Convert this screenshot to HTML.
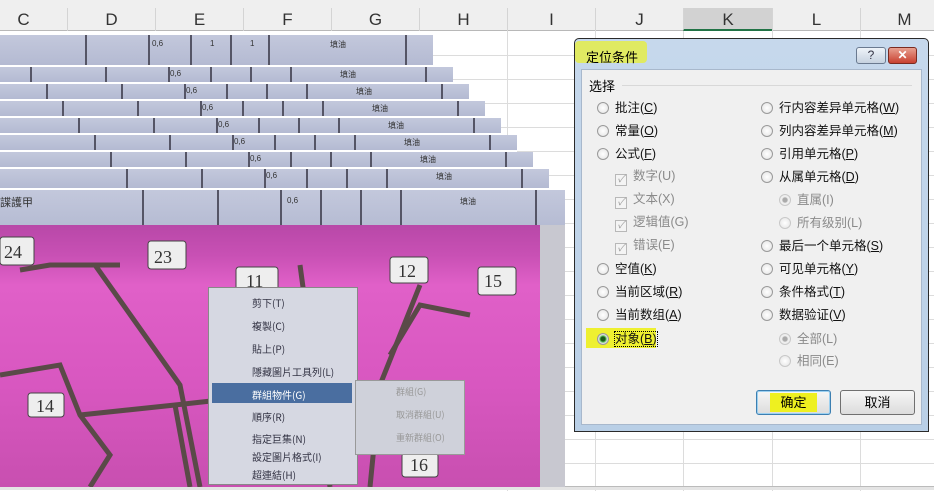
<!DOCTYPE html>
<html><head><meta charset="utf-8"><style>
*{margin:0;padding:0;box-sizing:border-box}
body{width:934px;height:490px;overflow:hidden;background:#fff;position:relative;font-family:"Liberation Sans","Noto Sans CJK SC",sans-serif;}
.abs{position:absolute}
.hdr{position:absolute;top:0;left:0;width:934px;height:31px;background:#efefef;border-bottom:1px solid #b8b8b8}
.col{position:absolute;top:8px;height:23px;border-left:1px solid #d4d4d4;font-size:17px;color:#333;text-align:center;line-height:24px}
.hl{position:absolute;left:0;width:934px;height:1px;background:#dcdcdc}
.vl{position:absolute;top:31px;width:1px;height:460px;background:#dcdcdc}
.strip{position:absolute;left:0;background:linear-gradient(#c3c8dc,#b4bad2);border-bottom:2px solid #fff}
.strip span{position:absolute;top:2px;font-size:8px;color:#333}
.strip b{position:absolute;top:0;bottom:0;width:2px;background:#556}
.dlg{position:absolute;left:574px;top:38px;width:355px;height:394px;border:1px solid #2a2a2a;border-radius:5px 5px 0 0;background:linear-gradient(#c6d8ec,#b9cfe6)}
.pan{position:absolute;left:6px;top:30px;width:341px;height:356px;background:#f0f0f0;border:1px solid #a8b8cc}
.o{position:absolute;font-size:12.5px;color:#111;white-space:nowrap;line-height:14px}
.o.d{color:#8a8a8a}
.r{display:inline-block;width:12px;height:12px;border-radius:50%;border:1px solid #9a9a9a;background:radial-gradient(#fff,#e2e2e2);vertical-align:-2px;margin-right:6px}
.r.d{border-color:#c8c8c8}
.c{display:inline-block;width:12px;height:12px;border:1px solid #b8b8b8;background:#f4f4f4;vertical-align:-2px;margin-right:6px;font-size:10px;line-height:10px;color:#9a9a9a;text-align:center}
u{text-decoration:underline}
.btn{position:absolute;height:25px;border:1px solid #707070;border-radius:3px;background:linear-gradient(#f6f6f6,#dcdcdc);font-size:13px;text-align:center;line-height:23px}
.mi{position:absolute;left:44px;font-size:10px;color:#334}
.si{position:absolute;left:40px;font-size:9px;color:#999}
</style></head><body>
<div class="hdr">
 <div class="col" style="left:-21px;width:88px">C</div>
 <div class="col" style="left:67px;width:88px">D</div>
 <div class="col" style="left:155px;width:88px">E</div>
 <div class="col" style="left:243px;width:88px">F</div>
 <div class="col" style="left:331px;width:88px">G</div>
 <div class="col" style="left:419px;width:88px">H</div>
 <div class="col" style="left:507px;width:88px">I</div>
 <div class="col" style="left:595px;width:88px">J</div>
 <div class="col" style="left:683px;width:89px;background:#d2d2d2;border-bottom:2px solid #217346">K</div>
 <div class="col" style="left:772px;width:88px">L</div>
 <div class="col" style="left:860px;width:88px">M</div>
</div>
<div class="vl" style="left:507px"></div><div class="vl" style="left:595px"></div><div class="vl" style="left:683px"></div><div class="vl" style="left:772px"></div><div class="vl" style="left:860px"></div>
<div class="hl" style="top:55px"></div><div class="hl" style="top:79px"></div><div class="hl" style="top:103px"></div><div class="hl" style="top:127px"></div><div class="hl" style="top:151px"></div><div class="hl" style="top:175px"></div><div class="hl" style="top:199px"></div><div class="hl" style="top:223px"></div><div class="hl" style="top:247px"></div><div class="hl" style="top:271px"></div><div class="hl" style="top:295px"></div><div class="hl" style="top:319px"></div><div class="hl" style="top:343px"></div><div class="hl" style="top:367px"></div><div class="hl" style="top:391px"></div><div class="hl" style="top:415px"></div><div class="hl" style="top:439px"></div><div class="hl" style="top:463px"></div>
<div class="abs" style="left:0;top:486px;width:934px;height:4px;background:#e4e4e4;border-top:1px solid #bbb"></div>

<div class="strip" style="top:35px;width:433px;height:32px"><b style="left:85px"></b><b style="left:148px"></b><b style="left:190px"></b><b style="left:230px"></b><b style="left:268px"></b><b style="left:405px"></b><span style="left:152px;top:4px">0,6</span><span style="left:210px;top:4px">1</span><span style="left:250px;top:4px">1</span><span style="left:330px;top:4px">填油</span></div>
<div class="strip" style="top:67px;width:453px;height:17px"><b style="left:30px"></b><b style="left:105px"></b><b style="left:168px"></b><b style="left:210px"></b><b style="left:250px"></b><b style="left:290px"></b><b style="left:425px"></b><span style="left:170px">0,6</span><span style="left:340px">填油</span></div>
<div class="strip" style="top:84px;width:469px;height:17px"><b style="left:46px"></b><b style="left:121px"></b><b style="left:184px"></b><b style="left:226px"></b><b style="left:266px"></b><b style="left:306px"></b><b style="left:441px"></b><span style="left:186px">0,6</span><span style="left:356px">填油</span></div>
<div class="strip" style="top:101px;width:485px;height:17px"><b style="left:62px"></b><b style="left:137px"></b><b style="left:200px"></b><b style="left:242px"></b><b style="left:282px"></b><b style="left:322px"></b><b style="left:457px"></b><span style="left:202px">0,6</span><span style="left:372px">填油</span></div>
<div class="strip" style="top:118px;width:501px;height:17px"><b style="left:78px"></b><b style="left:153px"></b><b style="left:216px"></b><b style="left:258px"></b><b style="left:298px"></b><b style="left:338px"></b><b style="left:473px"></b><span style="left:218px">0,6</span><span style="left:388px">填油</span></div>
<div class="strip" style="top:135px;width:517px;height:17px"><b style="left:94px"></b><b style="left:169px"></b><b style="left:232px"></b><b style="left:274px"></b><b style="left:314px"></b><b style="left:354px"></b><b style="left:489px"></b><span style="left:234px">0,6</span><span style="left:404px">填油</span></div>
<div class="strip" style="top:152px;width:533px;height:17px"><b style="left:110px"></b><b style="left:185px"></b><b style="left:248px"></b><b style="left:290px"></b><b style="left:330px"></b><b style="left:370px"></b><b style="left:505px"></b><span style="left:250px">0,6</span><span style="left:420px">填油</span></div>
<div class="strip" style="top:169px;width:549px;height:21px"><b style="left:126px"></b><b style="left:201px"></b><b style="left:264px"></b><b style="left:306px"></b><b style="left:346px"></b><b style="left:386px"></b><b style="left:521px"></b><span style="left:266px">0,6</span><span style="left:436px">填油</span></div>
<div class="strip" style="top:190px;width:565px;height:40px;border:0"><b style="left:142px"></b><b style="left:217px"></b><b style="left:280px"></b><b style="left:320px"></b><b style="left:360px"></b><b style="left:400px"></b><b style="left:535px"></b><span style="left:287px;top:6px">0,6</span><span style="left:460px;top:6px">填油</span><span style="left:0;top:4px;font-size:11px">諜護甲</span></div>

<div class="abs" style="left:0;top:225px;width:540px;height:262px;background:linear-gradient(#b848a8 0,#c850b4 30px,#e060c8 60px,#d857c0 160px,#c84fb0 262px)"></div>
<div class="abs" style="left:540px;top:225px;width:25px;height:262px;background:#c8c8d0"></div>
<svg class="abs" style="left:0;top:225px" width="540" height="262"><g fill="none" stroke="#5a4a48" stroke-width="5">
<path d="M20 45 L50 40 L120 40 M95 40 L180 160 L200 262"/><path d="M0 150 L60 140 L80 190 L110 230 L90 262"/><path d="M80 190 L175 180 L220 175"/><path d="M175 180 L190 262"/><path d="M300 40 L330 262"/><path d="M420 60 L380 160 L370 262"/><path d="M470 90 L420 80 L390 130"/></g>
<g fill="#eee" stroke="#444"><rect x="0" y="12" width="34" height="28" rx="3"/><rect x="148" y="16" width="38" height="28" rx="3"/><rect x="236" y="42" width="42" height="26" rx="3"/><rect x="390" y="32" width="38" height="26" rx="3"/><rect x="478" y="42" width="38" height="28" rx="3"/><rect x="28" y="168" width="36" height="24" rx="3"/><rect x="402" y="228" width="36" height="24" rx="3"/></g>
<g font-family="Liberation Serif" font-size="18" fill="#333"><text x="4" y="33">24</text><text x="154" y="38">23</text><text x="246" y="62">11</text><text x="398" y="52">12</text><text x="484" y="62">15</text><text x="36" y="187">14</text><text x="410" y="246">16</text></g></svg>

<div class="abs" style="left:208px;top:287px;width:150px;height:198px;background:#d6d8e2;border:1px solid #888"></div>
<div class="abs" style="left:212px;top:383px;width:140px;height:20px;background:#4a6ea0"></div>
<div class="abs" style="left:355px;top:380px;width:110px;height:75px;background:#cfd1da;border:1px solid #999;font-family:'Noto Sans CJK TC',sans-serif">
<div class="si" style="top:4px">群組(G)</div><div class="si" style="top:27px">取消群組(U)</div><div class="si" style="top:50px">重新群組(O)</div></div>
<div class="abs" style="left:208px;top:287px;width:150px;height:198px;font-family:'Noto Sans CJK TC',sans-serif">
<div class="mi" style="top:8px">剪下(T)</div><div class="mi" style="top:31px">複製(C)</div><div class="mi" style="top:54px">貼上(P)</div><div class="mi" style="top:77px">隱藏圖片工具列(L)</div><div class="mi" style="top:100px;color:#fff">群組物件(G)</div><div class="mi" style="top:122px">順序(R)</div><div class="mi" style="top:144px">指定巨集(N)</div><div class="mi" style="top:162px">設定圖片格式(I)</div><div class="mi" style="top:180px">超連結(H)</div></div>

<div class="dlg">
 <div class="abs" style="left:0;top:2px;width:72px;height:22px;background:#e6ef40;opacity:.8;border-radius:4px"></div>
 <div class="abs" style="left:11px;top:8px;font-size:13px">定位条件</div>
 <div class="abs" style="left:281px;top:8px;width:30px;height:17px;border:1px solid #6a7a90;border-radius:3px;background:linear-gradient(#eef3f9,#c6d2e0);font-size:12px;text-align:center;line-height:15px;color:#334">?</div>
 <div class="abs" style="left:313px;top:8px;width:29px;height:17px;border:1px solid #7a2a20;border-radius:3px;background:linear-gradient(#e8a090,#c84030);font-size:12px;font-weight:bold;text-align:center;line-height:15px;color:#fff">✕</div>
 <div class="pan">
  <div class="abs" style="left:7px;top:6px;font-size:13px">选择</div>
  <div class="abs" style="left:40px;top:15px;width:290px;height:1px;background:#d8d8d8"></div>
  <div class="o" style="left:15px;top:31px"><i class="r"></i>批注(<u>C</u>)</div>
  <div class="o" style="left:15px;top:54px"><i class="r"></i>常量(<u>O</u>)</div>
  <div class="o" style="left:15px;top:77px"><i class="r"></i>公式(<u>F</u>)</div>
  <div class="o d" style="left:33px;top:99px"><i class="c">✓</i>数字(U)</div>
  <div class="o d" style="left:33px;top:122px"><i class="c">✓</i>文本(X)</div>
  <div class="o d" style="left:33px;top:145px"><i class="c">✓</i>逻辑值(G)</div>
  <div class="o d" style="left:33px;top:168px"><i class="c">✓</i>错误(E)</div>
  <div class="o" style="left:15px;top:192px"><i class="r"></i>空值(<u>K</u>)</div>
  <div class="o" style="left:15px;top:215px"><i class="r"></i>当前区域(<u>R</u>)</div>
  <div class="o" style="left:15px;top:238px"><i class="r"></i>当前数组(<u>A</u>)</div>
  <div class="abs" style="left:4px;top:258px;width:70px;height:20px;background:#eef030"></div>
  <div class="o" style="left:15px;top:262px"><i class="r" style="background:radial-gradient(#1a5a1a 30%,#6c6 45%,#ddd 60%)"></i><span style="outline:1px dotted #000">对象(<u>B</u>)</span></div>
  <div class="o" style="left:179px;top:31px"><i class="r"></i>行内容差异单元格(<u>W</u>)</div>
  <div class="o" style="left:179px;top:54px"><i class="r"></i>列内容差异单元格(<u>M</u>)</div>
  <div class="o" style="left:179px;top:77px"><i class="r"></i>引用单元格(<u>P</u>)</div>
  <div class="o" style="left:179px;top:100px"><i class="r"></i>从属单元格(<u>D</u>)</div>
  <div class="o d" style="left:197px;top:123px"><i class="r d" style="background:radial-gradient(#aaa 30%,#eee 45%)"></i>直属(I)</div>
  <div class="o d" style="left:197px;top:146px"><i class="r d"></i>所有级别(L)</div>
  <div class="o" style="left:179px;top:169px"><i class="r"></i>最后一个单元格(<u>S</u>)</div>
  <div class="o" style="left:179px;top:192px"><i class="r"></i>可见单元格(<u>Y</u>)</div>
  <div class="o" style="left:179px;top:215px"><i class="r"></i>条件格式(<u>T</u>)</div>
  <div class="o" style="left:179px;top:238px"><i class="r"></i>数据验证(<u>V</u>)</div>
  <div class="o d" style="left:197px;top:262px"><i class="r d" style="background:radial-gradient(#aaa 30%,#eee 45%)"></i>全部(L)</div>
  <div class="o d" style="left:197px;top:284px"><i class="r d"></i>相同(E)</div>
  <div class="btn" style="left:174px;top:320px;width:75px;border-color:#3c7fb1;box-shadow:inset 0 0 0 1px #9cd0f0"><span style="background:#eef020;padding:2px 10px">确定</span></div>
  <div class="btn" style="left:258px;top:320px;width:75px">取消</div>
 </div>
</div>
</body></html>
